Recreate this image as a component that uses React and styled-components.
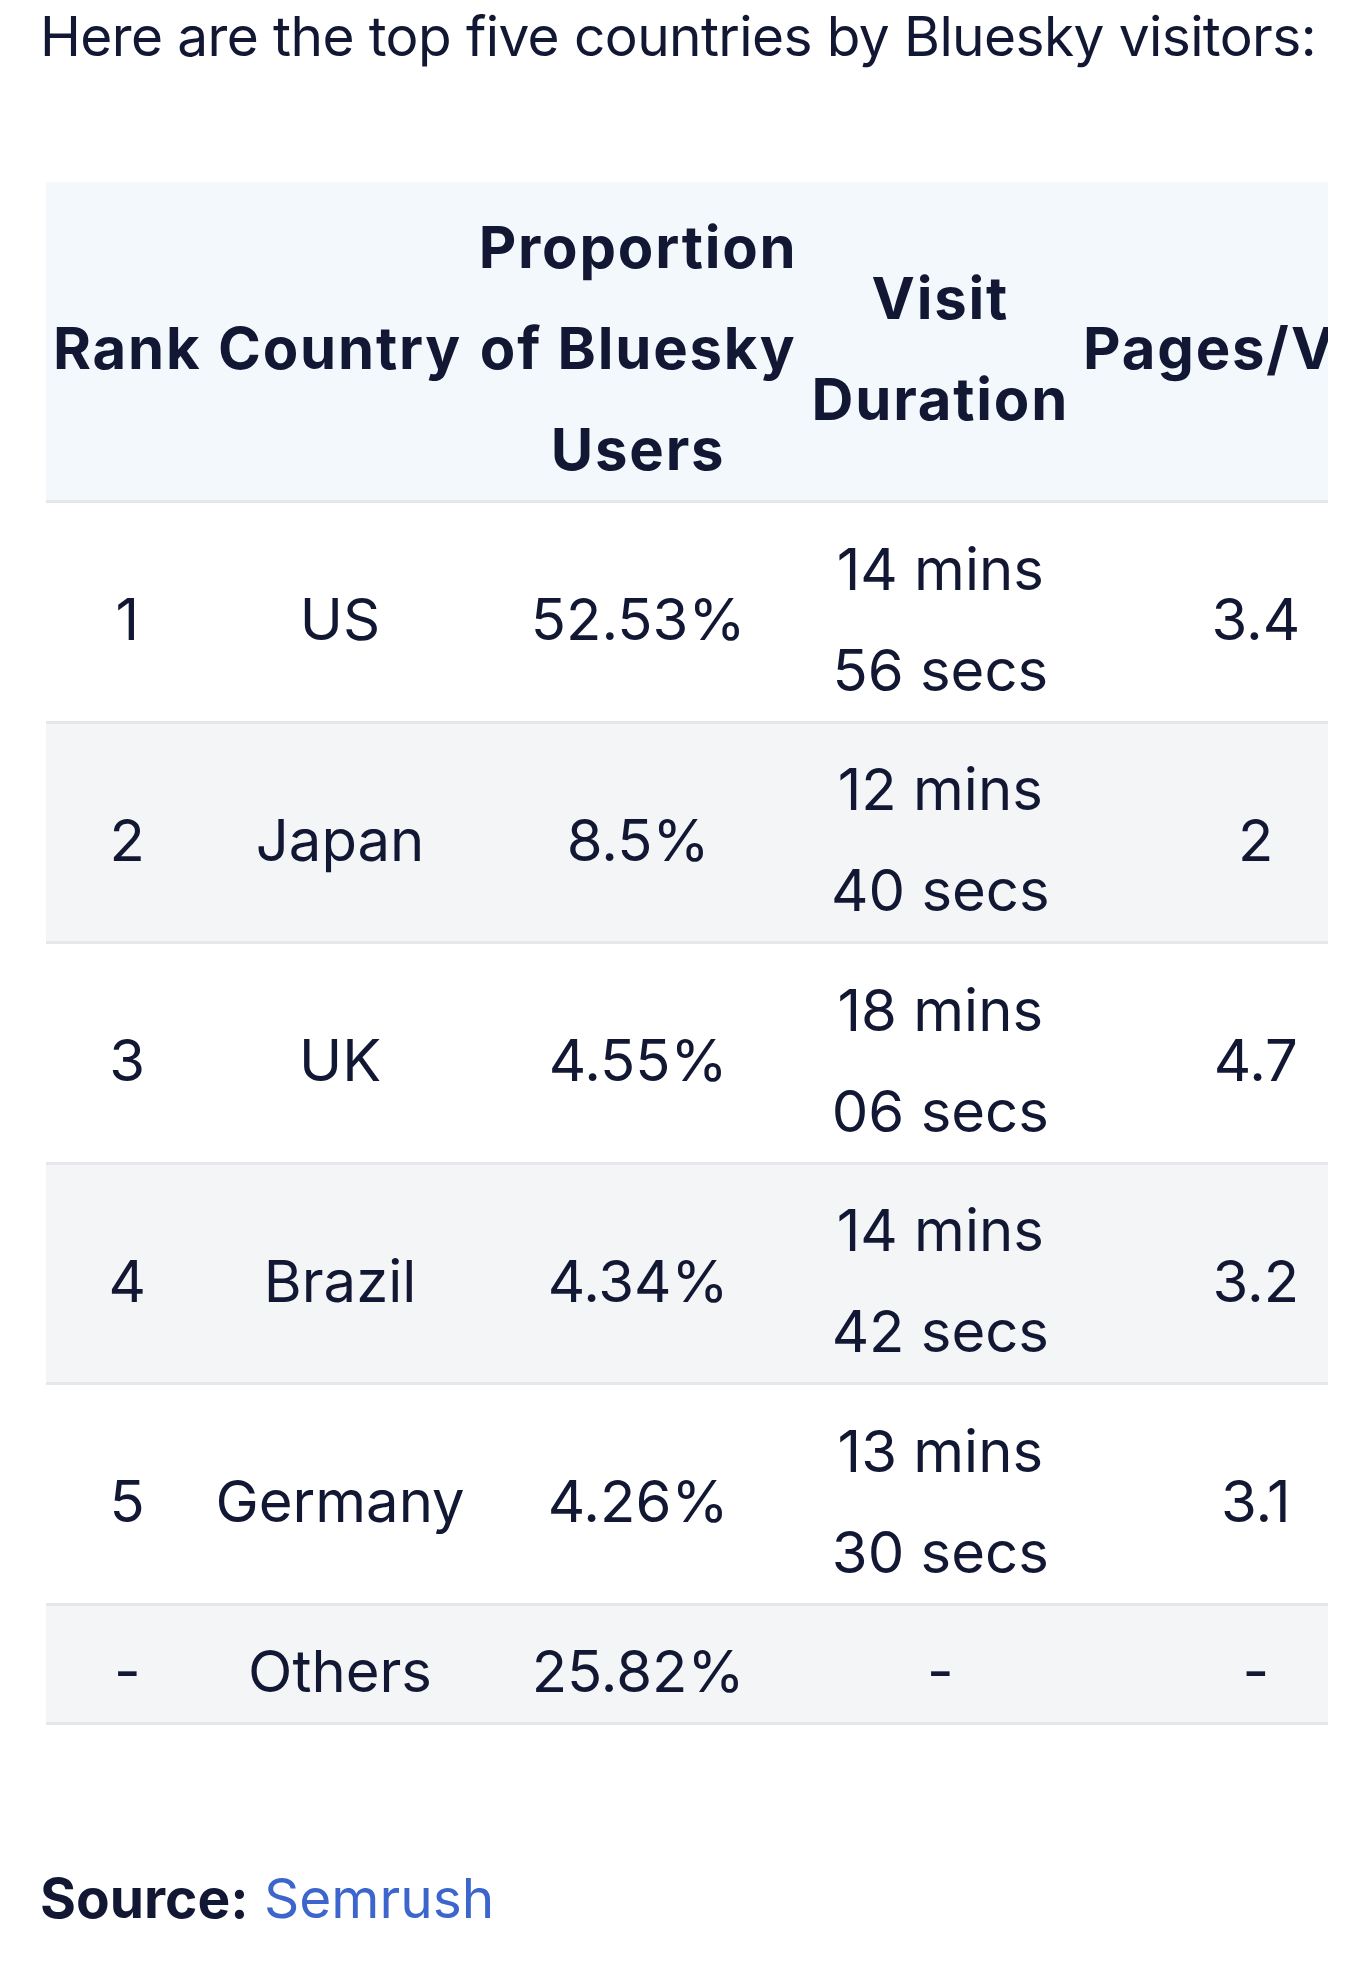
import React from "react";
import styled, { createGlobalStyle } from "styled-components";

const Global = createGlobalStyle`
  html, body { margin: 0; padding: 0; background: #ffffff; }
  body { font-family: Inter, "Noto Sans", sans-serif; color: #121833; }
`;

const Page = styled.main`
  width: 1368px;
  padding: 0 40px;
  box-sizing: border-box;
`;

const Intro = styled.p`
  margin: 0 0 110px;
  font-size: 55px;
  line-height: 72px;
  font-weight: 400;
  letter-spacing: -0.6px;
`;

const TableWrap = styled.div`
  margin-left: 6px;
  overflow-x: auto;
  scrollbar-width: none;
  &::-webkit-scrollbar { display: none; }
`;

const Table = styled.table`
  width: 100%;
  border-collapse: collapse;
  font-size: 58px;
  line-height: 101px;
`;

const HeadRow = styled.tr`
  background: #f3f8fd;
  border-bottom: 3px solid #e5e7eb;
`;

const Th = styled.th`
  padding: 15px 7px 0;
  font-weight: 700;
  letter-spacing: 1.8px;
  text-align: center;
  vertical-align: middle;
`;

const Row = styled.tr`
  background: ${(p) => (p.$shaded ? "#f4f5f7" : "#ffffff")};
  border-bottom: 3px solid #e5e7eb;
`;

const Td = styled.td`
  padding: 15.5px 7px 0;
  font-weight: 400;
  text-align: center;
  vertical-align: middle;
`;

const Source = styled.p`
  margin: 137px 0 0;
  font-size: 55px;
  line-height: 72px;
`;

const Label = styled.strong`
  font-weight: 700;
`;

const Link = styled.a`
  color: #3d66cc;
  text-decoration: none;
`;

const rows = [
  ["1", "US", "52.53%", "14 mins 56 secs", "3.4"],
  ["2", "Japan", "8.5%", "12 mins 40 secs", "2"],
  ["3", "UK", "4.55%", "18 mins 06 secs", "4.7"],
  ["4", "Brazil", "4.34%", "14 mins 42 secs", "3.2"],
  ["5", "Germany", "4.26%", "13 mins 30 secs", "3.1"],
  ["-", "Others", "25.82%", "-", "-"],
];

export default function App() {
  return (
    <>
      <Global />
      <Page>
        <Intro>Here are the top five countries by Bluesky visitors:</Intro>
        <TableWrap>
          <Table>
            <thead>
              <HeadRow>
                <Th>Rank</Th>
                <Th>Country</Th>
                <Th>Proportion of Bluesky Users</Th>
                <Th>Visit Duration</Th>
                <Th>Pages/Visit</Th>
              </HeadRow>
            </thead>
            <tbody>
              {rows.map((r, i) => (
                <Row key={i} $shaded={i % 2 === 1}>
                  {r.map((c, j) => (
                    <Td key={j}>{c}</Td>
                  ))}
                </Row>
              ))}
            </tbody>
          </Table>
        </TableWrap>
        <Source>
          <Label>Source:</Label> <Link href="#">Semrush</Link>
        </Source>
      </Page>
    </>
  );
}
